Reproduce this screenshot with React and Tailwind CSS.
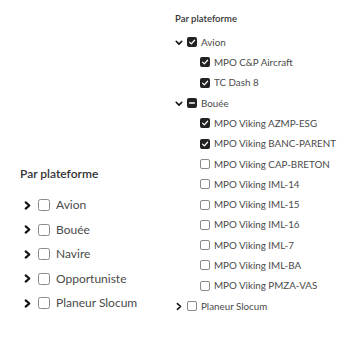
import React from "react"

const font = { fontFamily: 'Lato, "Noto Sans", sans-serif' }

function Chevron({ open, big }) {
    const s = big ? "block w-[9px] h-[11px]" : "block w-[8px] h-[9px]"
    return (
        <svg viewBox="0 0 10 10" className={s} fill="none" stroke="#111" strokeWidth={big ? "2.4" : "2"} strokeLinecap="round" strokeLinejoin="round">
            {open ? <polyline points="1.5,3.5 5,7 8.5,3.5" /> : <polyline points="3,1.5 7,5 3,8.5" />}
        </svg>
    )
}

function Box({ state, big }) {
    const size = big ? "w-[12px] h-[12px] rounded-[2.5px]" : "w-[10px] h-[10px] rounded-[2px]"
    if (state === "off") {
        return <span className={`block ${size} border border-[#8a8a8a] bg-white shrink-0`} />
    }
    return (
        <span className={`${size} bg-[#222] flex items-center justify-center shrink-0`}>
            <svg viewBox="0 0 10 10" className="block w-[8px] h-[8px]" fill="none" stroke="white" strokeWidth="1.6" strokeLinecap="round" strokeLinejoin="round">
                {state === "on" ? <polyline points="2,5.2 4.2,7.3 8.2,2.8" /> : <line x1="2" y1="5" x2="8" y2="5" />}
            </svg>
        </span>
    )
}

function LeftPanel() {
    const items = ["Avion", "Bouée", "Navire", "Opportuniste", "Planeur Slocum"]
    return (
        <div className="w-[175px] shrink-0 pl-5 pt-[164px]">
            <div className="text-[12px] font-semibold text-[#333] leading-[20px]">Par plateforme</div>
            <div className="mt-[9px] pl-[3px]">
                {items.map((t) => (
                    <div key={t} className="flex items-center h-[24.5px]">
                        <Chevron big />
                        <span className="ml-[6px]"><Box state="off" big /></span>
                        <span className="ml-[6px] text-[12px] text-[#4a4a4a]">{t}</span>
                    </div>
                ))}
            </div>
        </div>
    )
}

function Row({ children, indent }) {
    return <div className={`flex items-center h-[20.3px] ${indent ? "pl-[25px]" : ""}`}>{children}</div>
}

function RightPanel() {
    const avion = ["MPO C&P Aircraft", "TC Dash 8"]
    const bouee = [
        ["MPO Viking AZMP-ESG", "on"],
        ["MPO Viking BANC-PARENT", "on"],
        ["MPO Viking CAP-BRETON", "off"],
        ["MPO Viking IML-14", "off"],
        ["MPO Viking IML-15", "off"],
        ["MPO Viking IML-16", "off"],
        ["MPO Viking IML-7", "off"],
        ["MPO Viking IML-BA", "off"],
        ["MPO Viking PMZA-VAS", "off"],
    ]
    const label = "ml-[4px] text-[9.8px] text-[#4a4a4a]"
    return (
        <div className="pt-[10px]">
            <div className="text-[9.5px] font-semibold text-[#333] leading-[18px]">Par plateforme</div>
            <div className="mt-[4px]">
                <Row>
                    <Chevron open />
                    <span className="ml-[4px]"><Box state="on" /></span>
                    <span className={label}>Avion</span>
                </Row>
                {avion.map((t) => (
                    <Row key={t} indent>
                        <Box state="on" />
                        <span className={label}>{t}</span>
                    </Row>
                ))}
                <Row>
                    <Chevron open />
                    <span className="ml-[4px]"><Box state="mixed" /></span>
                    <span className={label}>Bouée</span>
                </Row>
                {bouee.map(([t, s]) => (
                    <Row key={t} indent>
                        <Box state={s} />
                        <span className={label}>{t}</span>
                    </Row>
                ))}
                <Row>
                    <Chevron />
                    <span className="ml-[4px]"><Box state="off" /></span>
                    <span className={label}>Planeur Slocum</span>
                </Row>
            </div>
        </div>
    )
}

export default function App() {
    return (
        <div className="flex w-[356px] h-[345px] bg-white overflow-hidden" style={font}>
            <LeftPanel />
            <RightPanel />
        </div>
    )
}
